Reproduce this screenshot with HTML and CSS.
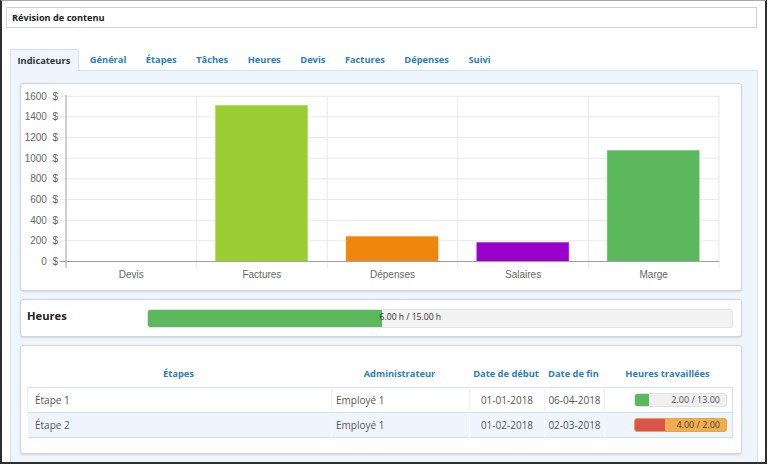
FILE: index.html
```html
<!DOCTYPE html>
<html lang="fr">
<head>
<meta charset="utf-8">
<title>Révision de contenu</title>
<link rel="stylesheet" href="styles.css">
</head>
<body>
<div class="window">
  <div class="title-input">Révision de contenu</div>
  <ul class="tabs">
    <li class="tab active">Indicateurs</li>
    <li class="tab">Général</li>
    <li class="tab">Étapes</li>
    <li class="tab">Tâches</li>
    <li class="tab">Heures</li>
    <li class="tab">Devis</li>
    <li class="tab">Factures</li>
    <li class="tab">Dépenses</li>
    <li class="tab">Suivi</li>
  </ul>
  <div class="panel">
    <div class="card chart-card">
      <svg class="chart" width="720" height="206" viewBox="0 0 720 206">
        <g class="grid">
          <line x1="39" y1="12.3" x2="698" y2="12.3"/>
          <line x1="39" y1="32.9" x2="698" y2="32.9"/>
          <line x1="39" y1="53.6" x2="698" y2="53.6"/>
          <line x1="39" y1="74.2" x2="698" y2="74.2"/>
          <line x1="39" y1="94.9" x2="698" y2="94.9"/>
          <line x1="39" y1="115.5" x2="698" y2="115.5"/>
          <line x1="39" y1="136.2" x2="698" y2="136.2"/>
          <line x1="39" y1="156.8" x2="698" y2="156.8"/>
          <line x1="175.6" y1="12" x2="175.6" y2="184"/>
          <line x1="306.2" y1="12" x2="306.2" y2="184"/>
          <line x1="436.8" y1="12" x2="436.8" y2="184"/>
          <line x1="567.4" y1="12" x2="567.4" y2="184"/>
          <line x1="698" y1="12" x2="698" y2="184"/>
        </g>
        <g class="ylabels">
          <text x="37" y="15.8">1600  $</text>
          <text x="37" y="36.4">1400  $</text>
          <text x="37" y="57.1">1200  $</text>
          <text x="37" y="77.7">1000  $</text>
          <text x="37" y="98.4">800  $</text>
          <text x="37" y="119">600  $</text>
          <text x="37" y="139.7">400  $</text>
          <text x="37" y="160.3">200  $</text>
          <text x="37" y="181">0  $</text>
        </g>
        <g class="bars">
          <rect x="194" y="21" width="93" height="156.5" fill="#9acd32"/>
          <rect x="324.6" y="152" width="93" height="25.5" fill="#f0870c"/>
          <rect x="455.2" y="158" width="93" height="19.5" fill="#9900cc"/>
          <rect x="585.8" y="66" width="93" height="111.5" fill="#5cb85c"/>
        </g>
        <g class="axis">
          <line x1="45" y1="11" x2="45" y2="184"/>
          <line x1="39" y1="177.5" x2="698" y2="177.5"/>
        </g>
        <g class="xlabels">
          <text x="110.3" y="194">Devis</text>
          <text x="240.9" y="194">Factures</text>
          <text x="371.5" y="194">Dépenses</text>
          <text x="502.1" y="194">Salaires</text>
          <text x="632.7" y="194">Marge</text>
        </g>
      </svg>
    </div>
    <div class="card hours-card">
      <div class="hours-label">Heures</div>
      <div class="hours-progress">
        <div class="fill green" style="width:40%"></div>
        <span class="hours-text">6.00 h / 15.00 h</span>
      </div>
    </div>
    <div class="card table-card">
      <table class="steps">
        <thead>
          <tr>
            <th class="c1">Étapes</th>
            <th class="c2">Administrateur</th>
            <th class="c3">Date de début</th>
            <th class="c4">Date de fin</th>
            <th class="c5">Heures travaillées</th>
          </tr>
        </thead>
        <tbody>
          <tr>
            <td class="left">Étape 1</td>
            <td class="left emp">Employé 1</td>
            <td>01-01-2018</td>
            <td>06-04-2018</td>
            <td class="prog-cell">
              <div class="mini-progress">
                <div class="fill green" style="width:15.4%"></div>
                <span class="mini-text">2.00 / 13.00</span>
              </div>
            </td>
          </tr>
          <tr class="alt">
            <td class="left">Étape 2</td>
            <td class="left emp">Employé 1</td>
            <td>01-02-2018</td>
            <td>02-03-2018</td>
            <td class="prog-cell">
              <div class="mini-progress over">
                <div class="fill red" style="width:33.3%"></div>
                <span class="mini-text">4.00 / 2.00</span>
              </div>
            </td>
          </tr>
        </tbody>
      </table>
    </div>
  </div>
</div>
</body>
</html>
```

FILE: styles.css
```css
* { box-sizing: border-box; }
html, body {
  margin: 0;
  padding: 0;
  background: #ffffff;
}
body {
  font-family: "Open Sans", "Liberation Sans", Arial, sans-serif;
  color: #333;
}
.window {
  width: 767px;
  height: 464px;
  border-left: 2px solid #2e2e2e;
  border-right: 2px solid #2e2e2e;
  border-bottom: 2px solid #2e2e2e;
  border-top: 1px solid #a8a8a8;
  overflow: hidden;
  background: #fff;
}
.title-input {
  margin: 6px 8px 0 4px;
  height: 21px;
  border: 1px solid #cfcfcf;
  font-size: 9.2px;
  font-weight: 700;
  line-height: 19px;
  padding-left: 5px;
  color: #222;
}
.tabs {
  list-style: none;
  margin: 20px 0 0 8px;
  padding: 0;
  display: flex;
  gap: 3px;
  height: 22px;
}
.tab {
  padding: 0 8px 0 6.5px;
  font-size: 9.3px;
  font-weight: 700;
  color: #2a7dbf;
  line-height: 22px;
  height: 22px;
  border: 1px solid transparent;
  border-bottom: none;
}
.tab.active {
  color: #333;
  background: #eef5fd;
  border-color: #d3e2f4;
  position: relative;
  top: 1px;
  line-height: 21px;
}
.panel {
  margin: 0 7px 0 8px;
  background: #eef5fd;
  border: 1px solid #d3e2f4;
  padding: 12px 15px 20px 9px;
  display: flex;
  flex-direction: column;
  gap: 8px;
}
.card {
  background: #fff;
  border: 1px solid #d2d6db;
  border-radius: 3px;
  box-shadow: 0 1px 2px rgba(0, 0, 0, 0.12);
}
.chart-card {
  height: 208px;
}
.chart {
  display: block;
}
.grid line {
  stroke: #e8e8e8;
  stroke-width: 1;
}
.axis line {
  stroke: #a0a0a0;
  stroke-width: 1;
}
.bars rect {
  stroke: rgba(255, 255, 255, 0.6);
  stroke-width: 1;
}
.ylabels text {
  font-family: "Liberation Sans", Arial, sans-serif;
  font-size: 10px;
  fill: #666;
  text-anchor: end;
  white-space: pre;
}
.xlabels text {
  font-family: "Liberation Sans", Arial, sans-serif;
  font-size: 10px;
  fill: #666;
  text-anchor: middle;
}
.hours-card {
  height: 38px;
  display: flex;
  align-items: center;
  padding: 0 8px 0 6px;
}
.hours-label {
  width: 120px;
  font-size: 11.2px;
  font-weight: 700;
  color: #222;
  margin-top: -5px;
}
.hours-progress {
  flex: 1;
  height: 19px;
  background: #f2f2f2;
  border: 1px solid #e4e4e4;
  border-radius: 3px;
  display: flex;
  align-items: center;
  overflow: hidden;
}
.fill {
  height: 100%;
}
.fill.green { background: #5cb85c; }
.fill.red { background: #d9534f; }
.hours-text {
  font-size: 8.6px;
  color: #333;
  margin-left: -2px;
  margin-top: -2px;
}
.table-card {
  padding: 15px 8px 15px 6px;
}
.steps {
  width: 100%;
  border-collapse: collapse;
  font-size: 10px;
}
.steps th {
  color: #2a7dbf;
  font-weight: 700;
  font-size: 9.3px;
  height: 26px;
  padding: 0 2px 0 0;
  text-align: center;
}
.steps th.c1 { width: 304px; }
.steps th.c2 { width: 138px; }
.steps th.c3 { width: 75px; }
.steps th.c4 { width: 60px; }
.steps tbody tr {
  border-top: 1px solid #cfe0f3;
  border-bottom: 1px solid #cfe0f3;
}
.steps tbody {
  border: 1px solid #cfe0f3;
}
.steps td {
  height: 25px;
  color: #555;
  text-align: center;
  border-left: 1px solid #edf1f6;
  padding: 0;
}
.steps td.left {
  text-align: left;
  padding-left: 7px;
}
.steps td.emp { padding-left: 4px; }
.steps tr.alt td {
  background: #eef5fd;
  border-left-color: #ffffff;
}
.prog-cell {
  padding-right: 5px !important;
}
.mini-progress {
  margin-left: auto;
  width: 93px;
  height: 14px;
  background: #f0f0f0;
  border: 1px solid #e2e2e2;
  border-radius: 3px;
  overflow: hidden;
  position: relative;
  display: flex;
}
.mini-progress.over {
  background: #f0ad4e;
  border-color: #e8a347;
}
.mini-text {
  position: absolute;
  right: 6px;
  top: -1px;
  font-size: 9px;
  line-height: 14px;
  color: #555;
}
.mini-progress.over .mini-text { color: #444; }
```
